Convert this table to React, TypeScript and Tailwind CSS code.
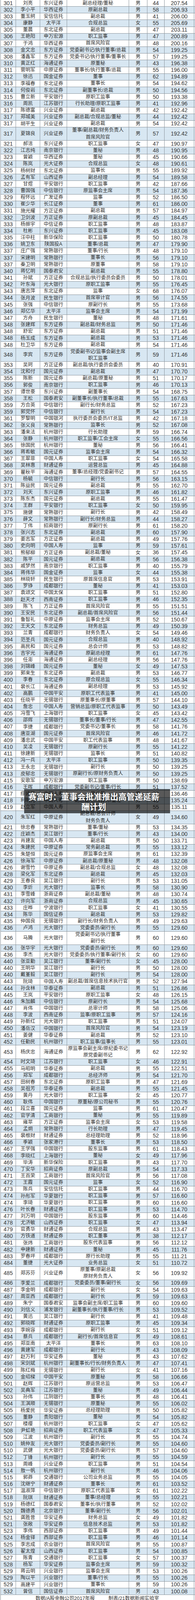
import React from "react";

// rank|name|company|title (^ = line break)|gender|age|pay
const RAW = `301|刘亮|东兴证券|副总经理/董秘|男|44|207.54
302|李小平|华西证券|原副总裁|男|58|206.93
303|董玉舸|安信信托|副总裁|男|41|206.00
304|康静|太平洋|合规总监|女|55|205.69
305|董晨|东北证券|副总裁|男|47|203.11
306|王艳阳|申万宏源|职工监事|男|47|200.89
307|于鸿|华西证券|首席风险官|男|48|200.16
308|金文忠|东方证券|党委副书记/执行董事/总裁|男|54|199.25
308|潘鑫军|东方证券|党委书记/执行董事/董事长|男|57|199.25
310|黄正红|海通证券|原董秘|男|43|196.38
311|菅明军|中原证券|董事长/执行董事/总裁|男|55|196.00
312|徐迅|国金证券|董事|男|62|194.89
313|李福春|东北证券|董事长|男|54|194.62
314|何俊岩|东北证券|副董事长/总裁|男|50|194.56
315|曹立新|平安银行|原职工监事|男|50|193.38
316|周凯|江苏银行|行长助理/原职工监事|男|41|192.96
317|陈德富|兴业证券|副总裁|男|42|192.42
317|郑城美|兴业证券|副总裁/合规总监/董秘|男|44|192.42
317|胡平生|兴业证券|副总裁|男|54|192.42
317|夏锦良|兴业证券|董事/副总裁/财务负责人^首席风险官|男|57|192.42
321|郝洁|东兴证券|职工监事|女|47|190.97
322|江志纯|南京银行|董秘|男|48|190.95
323|曾颖|华西证券|董秘|男|45|190.66
324|陈岚|光大证券|合规总监|女|48|190.61
325|杨树财|东北证券|监事长|男|55|189.92
326|孟有军|山西证券|副总经理|男|54|189.58
327|甘煜|平安银行|职工监事|男|42|187.66
328|曹国强|中信银行|原监事会主席|男|54|187.36
329|程怀远|广发证券|监事|男|52|186.50
330|崔少华|长江证券|董事|男|61|186.00
331|施光耀|方正证券|副总裁|男|57|184.97
332|卫剑波|方正证券|原副总裁|男|45|184.45
333|杨振宇|中信证券|职工监事|男|48|183.87
334|杜彬|东兴证券|职工监事|男|45|183.08
335|汪中柱|新华保险|职工监事|男|50|180.78
336|姚卫东|陕国投A|董事/总裁|男|47|179.90
337|庄广强|常熟银行|董事/行长|男|48|179.10
337|宋建明|常熟银行|董事长|男|56|179.10
337|秦卫明|常熟银行|原董事|男|58|179.10
340|蒋忆明|国泰君安|副总裁|男|55|178.80
341|孙斌|方正证券|合规总监/执行委员会委员|男|50|178.01
342|叶东海|光大银行|原职工监事|男|55|176.45
343|唐志萍|东北证券|监事|女|68|176.07
344|张月波|民生银行|首席审计官|男|56|174.55
345|张强|中信银行|原副行长|男|55|173.68
346|郑亿华|太平洋|监事会主席|男|54|171.99
347|方舟|民生银行|董秘|男|48|171.61
348|张建辉|东方证券|副总裁/财务总监|男|50|171.46
348|舒宏|东方证券|副总裁|男|51|171.46
348|杨玉成|东方证券|副总裁|男|53|171.46
348|杜卫华|东方证券|副总裁|男|54|171.46
348|李宾|东方证券|党委副书记/监事会副主席^职工监事|男|59|171.46
353|吴珂|方正证券|副总裁/执行委员会委员|男|40|170.91
354|沈和付|国元证券|副总裁|男|47|170.70
355|陈新|国元证券|副总裁/原董秘|男|51|170.17
356|郭俊|南京银行|职工监事|男|46|170.13
357|谭世豪|东兴证券|副董事长|男|54|168.75
358|王松|国泰君安|副董事长/执行董事/总裁|男|55|167.63
359|方合英|中信银行|副行长/财务总监|男|52|167.23
359|郭党怀|中信银行|副行长|男|54|167.23
361|罗黎明|中国银河|执行委员会委员/IT总监|男|42|167.18
362|张义良|常熟银行|监事长|男|52|167.08
363|潘来法|杭州银行|行长助理|男|59|166.74
364|张静|杭州银行|职工监事/工会主席|女|55|166.56
365|徐国民|杭州银行|董秘|男|56|166.41
366|蒋希敏|国元证券|监事会主席|男|54|166.32
367|王翠菲|中国人寿|职工监事|女|54|165.58
368|吴林惠|财通证券|运营总监|男|45|164.88
369|瞿秋平|海通证券|董事/总经理/党委副书记|男|57|164.55
370|杨毓|中信银行|副行长|男|56|163.15
371|陈益民|国元证券|副总裁|男|55|162.70
372|刘天|东兴证券|原职工监事|男|46|161.82
373|陈东杰|国元证券|副总裁|男|55|161.47
374|王群|平安银行|职工监事|女|50|159.95
375|施健|常熟银行|副行长|男|42|158.49
376|薛文|常熟银行|副行长/财务总监|男|44|158.27
377|丁伟|招商银行|原副行长|男|61|158.20
378|张兴志|东北证券|副总裁|男|60|157.90
379|姜志军|方正证券|副总裁|男|49|157.76
380|史向明|中国人寿|监事|男|59|157.61
381|熊郁柳|方正证券|副总裁/董秘|女|36|157.45
382|陈平|国元证券|副总裁|男|56|156.38
383|戚梦然|南京银行|职工监事|男|40|155.79
384|蒋伟华|国金证券|监事|女|44|155.38
385|林晓轩|民生银行|原首席信息官|男|53|153.91
386|罗铮|成都银行|董秘|男|41|153.03
387|袁颂文|中国太保|职工监事|男|51|152.80
388|赵天才|西南证券|职工监事|男|46|152.35
389|陈飞|方正证券|首席风险官|男|55|151.51
390|王安民|东北证券|副总裁/首席风险官|男|56|151.44
391|鲁智礼|中原证券|监事会主席|男|52|150.67
392|王天文|东北证券|财务总监|男|49|150.39
393|兰青|成都银行|财务负责人|女|54|149.46
394|范圣兵|国元证券|合规总监|男|40|148.92
395|高民和|国元证券|总会计师|男|53|148.82
396|吉宇光|海通证券|原副总经理|男|61|147.76
396|任澎|海通证券|副总经理|男|56|147.76
398|刘锦峰|国元证券|董秘|女|49|147.53
399|郭来生|东北证券|副总裁|男|53|146.77
400|李春|东北证券|原合规总监|女|55|146.34
401|裴长江|海通证券|副总经理|男|53|145.92
402|高鹏|中国平安|原职工代表监事|男|41|145.00
403|任晓平|无锡银行|原董事长/原董事|男|57|144.10
404|詹忠|中国人寿|营销总监/原职工代表监事|男|50|143.49
405|冯雪飞|上海银行|职工监事|女|45|143.42
406|邵辉|无锡银行|董事长/董事/行长|男|47|142.55
407|李捷|成都银行|党委书记/董事长|男|58|141.76
408|唐亚湖|国元证券|首席风险官|男|46|141.72
409|潘忠武|中国平安|职工代表监事|男|48|141.67
410|吴凌|无锡银行|原副行长|男|55|141.22
411|徐建新|无锡银行|监事长|男|51|140.82
412|冯一兵|太平洋|职工监事|男|50|139.35
413|王永忠|无锡银行|副行长|男|50|139.25
413|皮郁忠|无锡银行|原副行长/原财务负责人|男|50|139.25
415|安歌军|申万宏源|职工监事|男|50|138.69
416|王晖|成都银行|党委副书记/董事/行长|男|51|137.52
417|缪建民|中国人寿|原总裁|男|52|136.46
418|利明光|中国人寿|副总裁/总精算师/董秘|男|49|135.24
419|赵立军|中国人寿|副总裁|男|55|135.11
420|朱军红|中原证券|副总裁/总会计师^财务负责人|女|49|134.60
421|徐忠春|常熟银行|董事/董秘|男|53|134.35
422|庄颖杰|吴江银行|董事/行长|男|43|134.00
423|肖建友|中国人寿|副总裁|男|50|133.71
424|朱建民|中原证券|常务副总裁|男|55|133.12
425|朱楚恒|国元证券|原监事会主席|男|61|132.39
426|徐海军|中原证券|副总裁/原董秘|男|48|132.08
426|谢雪竹|中原证券|副总裁/合规总监|女|48|132.08
428|梁化军|东北证券|副总裁|男|45|132.03
429|王春良|吴江银行|副行长|男|53|131.05
430|李炘|光大银行|监事长|男|58|130.90
431|李雪峰|浙商证券|副总裁/董秘|男|48|130.74
432|许向军|浙商证券|合规总监|男|45|130.65
433|庄晔|宁波银行|职工监事|女|41|130.55
434|陈华|国信证券|副总裁|男|53|129.82
435|仲国良|无锡银行|副行长/财务负责人|男|49|129.63
436|卢鸿|光大银行|党委委员/副行长|男|55|129.60
436|马腾|光大银行|党委副书记/执行董事^副行长|男|60|129.60
436|张华宇|光大银行|党委委员/副行长|男|60|129.60
436|李杰|光大银行|党委委员/执行董事/副行长|女|60|129.60
440|张亚勤|吴江银行|董事/副行长|女|45|128.00
440|王明华|吴江银行|副行长|男|50|128.00
440|戴堇毅|吴江银行|副行长|男|54|128.00
443|阮琦|中国人寿|副总裁/首席信息技术执行官|男|52|127.94
444|孙含林|华泰证券|副总裁|男|51|126.86
445|王岚|平安银行|原职工监事|女|48|126.15
446|朱加麟|中信银行|原副行长|男|54|125.68
447|肖伟|中国银行|总审计师|男|58|125.06
448|李波|西南证券|监事/原职工监事|男|57|124.16
449|孙新红|光大银行|职工监事|男|51|124.07
450|潘岳汉|中国银行|首席风险官|男|54|123.19
451|姜健|华泰证券|副总裁|男|52|123.10
452|任勤民|杭州银行|职工监事/监事长|男|55|123.01
453|杨庆忠|海通证券|原监事会副主席/原纪委书记^原党委副书记|男|62|122.92
454|时文琦|江苏银行|职工监事|女|46|122.91
455|马昭明|华泰证券|副总裁|男|55|122.51
456|郑军|成都银行|总经济师|男|54|121.70
457|田树春|东北证券|原职工监事|男|47|121.69
458|吴祖芳|华泰证券|副总裁|男|55|121.45
459|黄丹|光大银行|职工监事|女|45|120.77
460|耿伟|中国银行|原董秘/原公司秘书|男|55|120.76
461|段立喜|国元证券|监事|男|61|120.47
462|官学清|工商银行|董秘|男|55|119.89
463|雍苹|方正证券|监事会主席|女|53|119.58
464|孟炯|常熟银行|行长助理|男|47|119.45
465|裴根财|财通证券|总经理助理|男|52|118.96
466|季颖|张家港行|董事长|男|53|118.50
467|王学强|中国银行|股东监事|男|61|118.43
468|李晓红|上海银行|董秘|女|49|117.96
469|毕涛|新华保险|职工监事|男|43|117.70
470|丁安华|招商证券|原副总裁|男|54|117.33
471|王百荣|工商银行|首席风险官|男|56|117.08
472|王霞|国元证券|监事|女|52|116.90
473|陈兵|安信信托|职工监事|男|44|116.70
474|孙彤军|华夏银行|职工监事|男|57|116.60
474|李琦|华夏银行|职工监事|男|60|116.60
476|叶长春|财通证券|职工监事|男|53|114.70
477|刘万明|中国银行|股东监事|男|60|114.46
478|尤济敏|山西证券|职工监事|女|47|113.94
479|官勇华|财通证券|合规总监|男|43|113.47
480|方铁道|财通证券|职工董事|男|38|112.17
481|张炜|工商银行|股东代表监事|男|56|112.12
482|申建新|财通证券|董秘|男|45|111.76
483|罗春坪|成都银行|原行长助理|男|55|111.21
484|董捷|光大证券|业务总监|女|51|110.72
485|郑苏芬|兴业证券|原董事/原副总裁^原财务负责人|女|56|109.92
486|李爱兰|成都银行|党委委员/董事/副行长|女|56|109.69
487|李金明|成都银行|副行长|女|54|109.63
487|周亚西|成都银行|副行长|男|59|109.63
489|朱宁|国泰君安|监事会副主席/职工监事|男|60|109.60
490|刘信义|浦发银行|副董事长/执行董事/行长|男|53|109.52
491|黄迅|吴江银行|副行长|男|41|109.48
492|郭晓晖|财通证券|原职工监事|男|45|109.34
493|李婉容|成都银行|副行长|女|51|109.12
494|蔡兵|成都银行|副行长/首席信息官|男|49|108.61
495|郑亚南|太平洋|董事长|男|63|108.10
496|黄建军|成都银行|副行长|男|43|108.09
497|赵万利|华安证券|董秘|男|43|107.62
498|宋剑斌|杭州银行|副董事长/行长/财务负责人|男|47|107.41
499|陈红梅|无锡银行|副行长|女|41|107.16
500|金绍樑|中国平安|原董秘|男|58|106.66
501|赵辉|江苏银行|原运营总监|男|53|106.47
502|吴典军|江苏银行|董秘|男|49|106.44
503|孙伟|江阴银行|董事长|男|48|106.41
504|王淇顺|无锡银行|原董秘|男|55|106.02
505|杨爱民|华安证券|总经理助理|男|50|105.82
505|董静|贵阳银行|董秘|男|54|105.82
507|楼缨|杭州银行|职工监事|女|47|105.62
508|尹虹艳|招商证券|职工代表监事|女|47|105.33
509|江波|杭州银行|副行长|男|55|104.74
510|姚仲友|光大银行|党委委员/副行长|男|55|104.60
510|武健|光大银行|党委委员/副行长|男|57|104.60
512|丁锋|杭州银行|副行长|男|55|104.59
513|周峰|兴业证券|职工监事|男|51|104.54
514|敖一帆|杭州银行|副行长|男|46|104.06
515|郭莽|交通银行|公司业务总监|男|55|104.05
516|沈继宁|财通证券|董事长|男|61|103.52
517|温淑萍|中信银行|原职工代表监事|女|61|102.22
518|阮琪|财通证券|董事/总经理|男|55|102.21
519|杨德红|国泰君安|董事长/执行董事|男|52|102.02
520|魏德勇|北京银行|董事/副行长|男|56|102.01
521|龚胜昔|华安证券|财务总监|女|49|101.82
521|张敞|华安证券|信息技术总监|男|53|101.82
523|李伟|西部证券|职工监事|男|49|101.44
524|杨金铎|西部证券|职工监事|男|46|101.14
525|李志成|农业银行|首席风险官|男|55|100.87
526|翟太煌|山西证券|职工监事|男|54|100.85
527|陈青|交通银行|职工监事|女|57|100.37
528|杨军|华安证券|监事会主席|男|59|100.32
529|蒋云明|兴业银行|监事会主席|男|53|100.26
529|陶以平|兴业银行|董事/行长|男|55|100.26
529|高建平|兴业银行|董事长|男|59|100.26
532|曾信|国信证券|首席风险官|男|43|100.08`;

const rows = RAW.trim()
  .split("\n")
  .map((line) => line.split("|"));

const cell = "flex shrink-0 items-center justify-center border-r border-[#8a949c]";
const num = "text-[14px]";
const cjk = "text-[12.5px]";

function Row({ r, i }: { r: string[]; i: number }) {
  const [rank, name, company, title, gender, age, pay] = r;
  const lines = title.split("^");
  const double = lines.length > 1;
  return (
    <div
      className={`flex border-b border-[#8a949c] ${i % 2 ? "bg-[#d8e7f2]" : "bg-white"} ${
        double ? "h-[34.32px]" : "h-[17.16px]"
      }`}
    >
      <div className={`${cell} ${num} w-[40px] border-l`}>{rank}</div>
      <div className={`${cell} ${cjk} w-[62px]`}>{name}</div>
      <div className={`${cell} ${cjk} w-[69px]`}>{company}</div>
      <div className={`${cell} ${cjk} w-[159px] flex-col leading-[17.16px] whitespace-nowrap`}>
        {lines.map((t, k) => (
          <span key={k}>{t}</span>
        ))}
      </div>
      <div className={`${cell} ${cjk} w-[47px]`}>{gender}</div>
      <div className={`${cell} ${num} w-[44px]`}>{age}</div>
      <div className={`${cell} ${num} w-[76px]`}>{pay}</div>
    </div>
  );
}

export default function App() {
  return (
    <div className="relative w-[500px] bg-white pl-[1px] text-[#333] font-['Liberation_Sans','Noto_Sans_CJK_SC',sans-serif]">
      {rows.map((r, i) => (
        <Row key={i} r={r} i={i} />
      ))}
      <div className="flex h-[19px] w-[497px] items-center justify-center gap-[35px] border-x border-[#8a949c] text-[12.5px]">
        <span>数据/A股金融公司2017年报</span>
        <span>制表/21数据新闻实验室</span>
      </div>

      {/* headline banner laid over the table */}
      <div className="absolute left-[62px] top-[2020px] w-[374px] bg-black/65 py-[5px] pl-[10px] pr-[27px] text-center text-[21px] font-bold leading-[26px] text-white font-['Noto_Sans_CJK_SC',sans-serif] [text-shadow:0_0_2px_rgba(0,0,0,0.6)]">
        赛富时：董事会批准推出高管递延薪酬计划
      </div>
    </div>
  );
}
